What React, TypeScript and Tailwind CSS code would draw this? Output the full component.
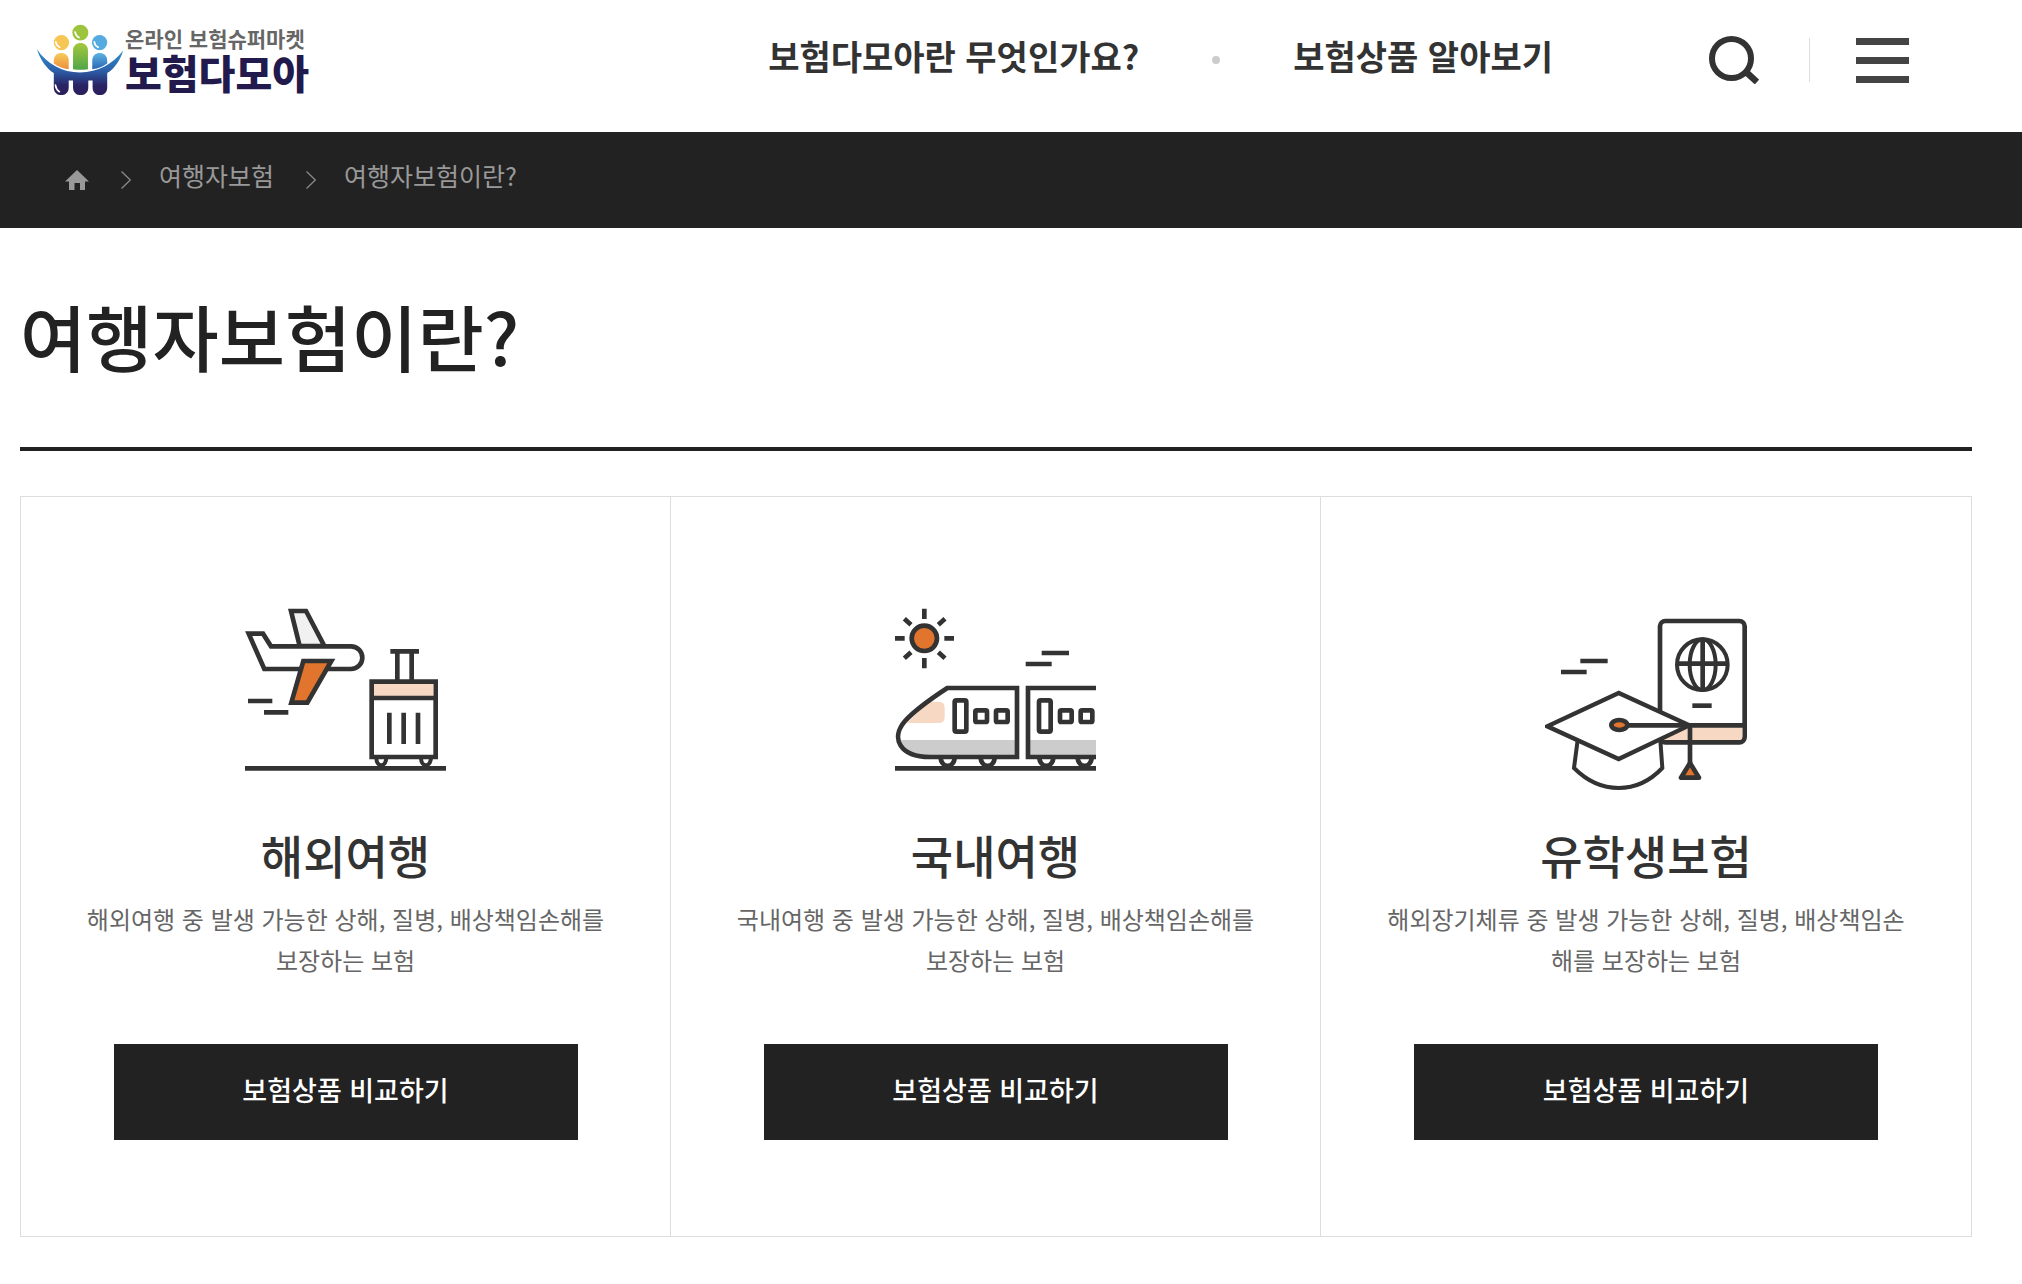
import React from "react";

const LogoMark = () => (
  <svg viewBox="46 38 264 220" className="w-[88px] h-[73px]" aria-hidden="true">
    <defs>
      <linearGradient id="yellow" x1="0" y1="0" x2="0" y2="1">
        <stop offset="0" stopColor="#f8cb5c" />
        <stop offset="1" stopColor="#ec8f3a" />
      </linearGradient>
      <linearGradient id="green" x1="0" y1="0" x2="0" y2="1">
        <stop offset="0" stopColor="#a5c73c" />
        <stop offset="1" stopColor="#4fa648" />
      </linearGradient>
      <linearGradient id="blue" x1="0" y1="0" x2="0" y2="1">
        <stop offset="0" stopColor="#5cb3e4" />
        <stop offset="1" stopColor="#2b66b4" />
      </linearGradient>
      <linearGradient id="navy" gradientUnits="userSpaceOnUse" x1="0" y1="115" x2="0" y2="250">
        <stop offset="0" stopColor="#2f8fcc" />
        <stop offset="0.45" stopColor="#2c62ac" />
        <stop offset="0.8" stopColor="#2a2464" />
        <stop offset="1" stopColor="#2b1f5c" />
      </linearGradient>
    </defs>
    <circle cx="122" cy="94" r="23" fill="#f6c552" />
    <circle cx="179" cy="64" r="24" fill="#9cc43c" />
    <circle cx="237" cy="94" r="23" fill="#55aadf" />
    <path d="M99 148c0-30 45-30 45 0v26c-18-2-33-8-45-17z" fill="url(#yellow)" />
    <path d="M157 118c0-30 45-30 45 0v56q-22 3-45 0z" fill="url(#green)" />
    <path d="M215 148c0-30 45-30 45 0v9c-12 9-27 15-45 17z" fill="url(#blue)" />
    <path
      d="M48 114c30 44 76 70 130 70s100-26 130-66c-8 28-25 54-48 68v43c0 31-44 31-44 0v-21h-13v21c0 31-46 31-46 0v-21h-13v21c0 31-45 31-45 0v-43c-23-14-42-44-51-72z"
      fill="url(#navy)"
    />
    <path d="M105 92q2 12 12 16M163 62q2 12 12 17M221 92q2 12 12 16M104 222q2 14 12 20" stroke="#fff" strokeWidth="5" fill="none" strokeLinecap="round" />
  </svg>
);

const SearchIcon = () => (
  <svg viewBox="0 0 50 48" className="w-[50px] h-12" fill="none" stroke="#333" aria-hidden="true">
    <circle cx="22.5" cy="22.5" r="19.5" strokeWidth="6" />
    <path d="M36.5 35.5L48 46" strokeWidth="6.5" />
  </svg>
);

const HomeIcon = () => (
  <svg viewBox="0 0 24 20" className="w-6 h-5" fill="#999" aria-hidden="true">
    <path d="M12 0L24 11.5h-4V20h-5v-7H9.500v7H4v-8.500H0z" />
  </svg>
);

const ChevronIcon = () => (
  <svg viewBox="0 0 10 18" className="w-[10px] h-[18px]" fill="none" stroke="#888" strokeWidth="1.3" aria-hidden="true">
    <path d="M0.500 0.500L9.300 9L0.500 17.500" />
  </svg>
);

const PlaneIcon = () => (
  <svg viewBox="45 54 603 552" className="w-[201px] h-[184px]" fill="none" stroke="#333" strokeWidth="14" aria-hidden="true">
    <path d="M209 168L183 63h45l55 105z" fill="#f1f1f1" />
    <path d="M103 237L56 131h43l24 38h240a34 34 0 0 1 0 68z" fill="#fff" />
    <path d="M220 213h84L232 338h-48z" fill="#e2752d" />
    <path d="M54 333h73M102 367h73" />
    <path d="M502 270v-86M545 270v-86M481 184h86" />
    <path d="M425 275h192v226H425z" fill="#fff" />
    <path d="M432 282h178v36H432z" fill="#f7d9c3" stroke="none" />
    <path d="M425 324h192" />
    <path d="M478 368v94M521 368v94M564 368v94" />
    <path d="M439 505c2 28 27 28 30 0M573 505c2 28 27 28 30 0" strokeWidth="12" />
    <path d="M45 535h603" />
  </svg>
);

const TrainIcon = () => (
  <svg viewBox="45 54 603 552" className="w-[201px] h-[184px]" fill="none" stroke="#333" strokeWidth="14" aria-hidden="true">
    <circle cx="133" cy="145" r="38" fill="#e2752d" />
    <path d="M133 56v31M133 204v31M45 145h29M193 145h29M73 86l20 18M195 86l-20 18M73 205l20-18M195 205l-20-18" />
    <path d="M485 189h82M437 222h78" />
    <path d="M146 335h30q18 0 18 18v28q0 18-18 18H80z" fill="#f7d9c3" stroke="none" />
    <path d="M56 450h354v48H140c-50 0-78-14-84-48zM448 450h200v48H448z" fill="#ccc" stroke="none" />
    <path d="M411 294H202C150 328 105 360 75 393C30 445 60 501 150 501h261z" />
    <path d="M660 294H444v207h216" />
    <rect x="224" y="331" width="35" height="94" rx="5" />
    <rect x="286" y="361" width="35" height="35" rx="4" />
    <rect x="348" y="361" width="35" height="35" rx="4" />
    <rect x="477" y="331" width="35" height="94" rx="5" />
    <rect x="540" y="361" width="35" height="35" rx="4" />
    <rect x="602" y="361" width="35" height="35" rx="4" />
    <path d="M182 505c4 30 38 30 42 0M302 505c4 30 38 30 42 0M478 505c4 30 38 30 42 0M593 505c4 30 38 30 42 0" />
    <path d="M45 535h603" />
  </svg>
);

const StudentIcon = () => (
  <svg viewBox="45 24 606 552" className="w-[202px] h-[184px]" fill="none" stroke="#333" strokeWidth="14" aria-hidden="true">
    <path d="M151 183h82M93 216h77" />
    <rect x="390" y="63" width="254" height="364" rx="16" fill="#fff" />
    <path d="M397 382h240v26q0 12-12 12H397z" fill="#f7d9c3" stroke="none" />
    <circle cx="517" cy="194" r="76" strokeWidth="12" />
    <ellipse cx="518" cy="194" rx="39" ry="76" strokeWidth="12" />
    <path d="M518 118v152M441 191h152" />
    <path d="M487 317h58" />
    <path d="M143 420l-11 84q60 60 134 60t131-60l-6-84z" fill="#fff" strokeWidth="12" />
    <path d="M266 279L52 379l214 98L478 376z" fill="#fff" strokeWidth="13" />
    <path d="M280 376h364M480 376v114" />
    <ellipse cx="268" cy="375" rx="24" ry="15" fill="#e2752d" />
    <path d="M480 489l-27 44h54z" fill="#e2752d" strokeLinejoin="round" />
  </svg>
);

const App = () => {
  const products = [
    {
      title: "해외여행",
      desc: "해외여행 중 발생 가능한 상해, 질병, 배상책임손해를 보장하는 보험",
      icon: <PlaneIcon />,
    },
    {
      title: "국내여행",
      desc: "국내여행 중 발생 가능한 상해, 질병, 배상책임손해를 보장하는 보험",
      icon: <TrainIcon />,
    },
    {
      title: "유학생보험",
      desc: "해외장기체류 중 발생 가능한 상해, 질병, 배상책임손해를 보장하는 보험",
      icon: <StudentIcon />,
    },
  ];

  return (
    <div lang="ko" className="min-h-screen bg-white text-[#333] font-['Noto_Sans_CJK_KR',sans-serif]">
      {/* Header */}
      <header className="flex items-center h-[132px] pl-9 pr-[113px] pb-3">
        <a href="#" className="flex items-center gap-px">
          <LogoMark />
          <span className="flex flex-col">
            <span className="text-[21px] leading-6 font-bold text-[#666]">온라인 보험슈퍼마켓</span>
            <span className="text-[40px] leading-[44px] font-black text-[#22194d]">보험다모아</span>
          </span>
        </a>
        <nav className="flex items-center ml-auto text-[34px] leading-[48px] font-bold">
          <a href="#" className="pb-2">보험다모아란 무엇인가요?</a>
          <span className="w-2 h-2 mx-[73px] rounded-full bg-[#ccc]"></span>
          <a href="#" className="pb-2">보험상품 알아보기</a>
        </nav>
        <div className="flex items-center ml-[156px]">
          <button type="button" aria-label="검색">
            <SearchIcon />
          </button>
          <span className="w-px h-11 ml-[50px] mr-[46px] bg-[#ddd]"></span>
          <button type="button" aria-label="전체메뉴" className="flex flex-col gap-3 w-[53px]">
            <span className="h-[7px] bg-[#444]"></span>
            <span className="h-[7px] bg-[#444]"></span>
            <span className="h-[7px] bg-[#444]"></span>
          </button>
        </div>
      </header>

      {/* Breadcrumb */}
      <nav className="flex items-center h-24 pl-[65px] bg-[#222] text-[25px] text-[#999]">
        <a href="#" aria-label="홈">
          <HomeIcon />
        </a>
        <span className="ml-8 mr-7">
          <ChevronIcon />
        </span>
        <a href="#" className="pb-2">여행자보험</a>
        <span className="ml-8 mr-7">
          <ChevronIcon />
        </span>
        <a href="#" className="pb-2">여행자보험이란?</a>
      </nav>

      <main className="pl-5 pr-[50px] pb-12">
        <h1 className="pt-[71px] pb-[76px] border-b-4 border-[#222] text-[72px] leading-[72px] font-medium text-[#222]">
          여행자보험이란?
        </h1>

        {/* Product cards */}
        <ul className="grid grid-cols-3 mt-[45px] border border-[#ddd] divide-x divide-[#ddd]">
          {products.map((product) => (
            <li key={product.title} className="flex flex-col items-center px-16 pt-[111px] pb-24 text-center">
              {product.icon}
              <h2 className="mt-[34px] text-[46px] leading-[56px] font-medium">{product.title}</h2>
              <p className="mt-4 text-2xl leading-[41px] text-[#666]">{product.desc}</p>
              <a
                href="#"
                className="flex items-center justify-center w-[464px] max-w-full h-24 mt-16 pb-1 bg-[#222] text-[27px] font-medium text-white"
              >
                보험상품 비교하기
              </a>
            </li>
          ))}
        </ul>
      </main>
    </div>
  );
};

export default App;
